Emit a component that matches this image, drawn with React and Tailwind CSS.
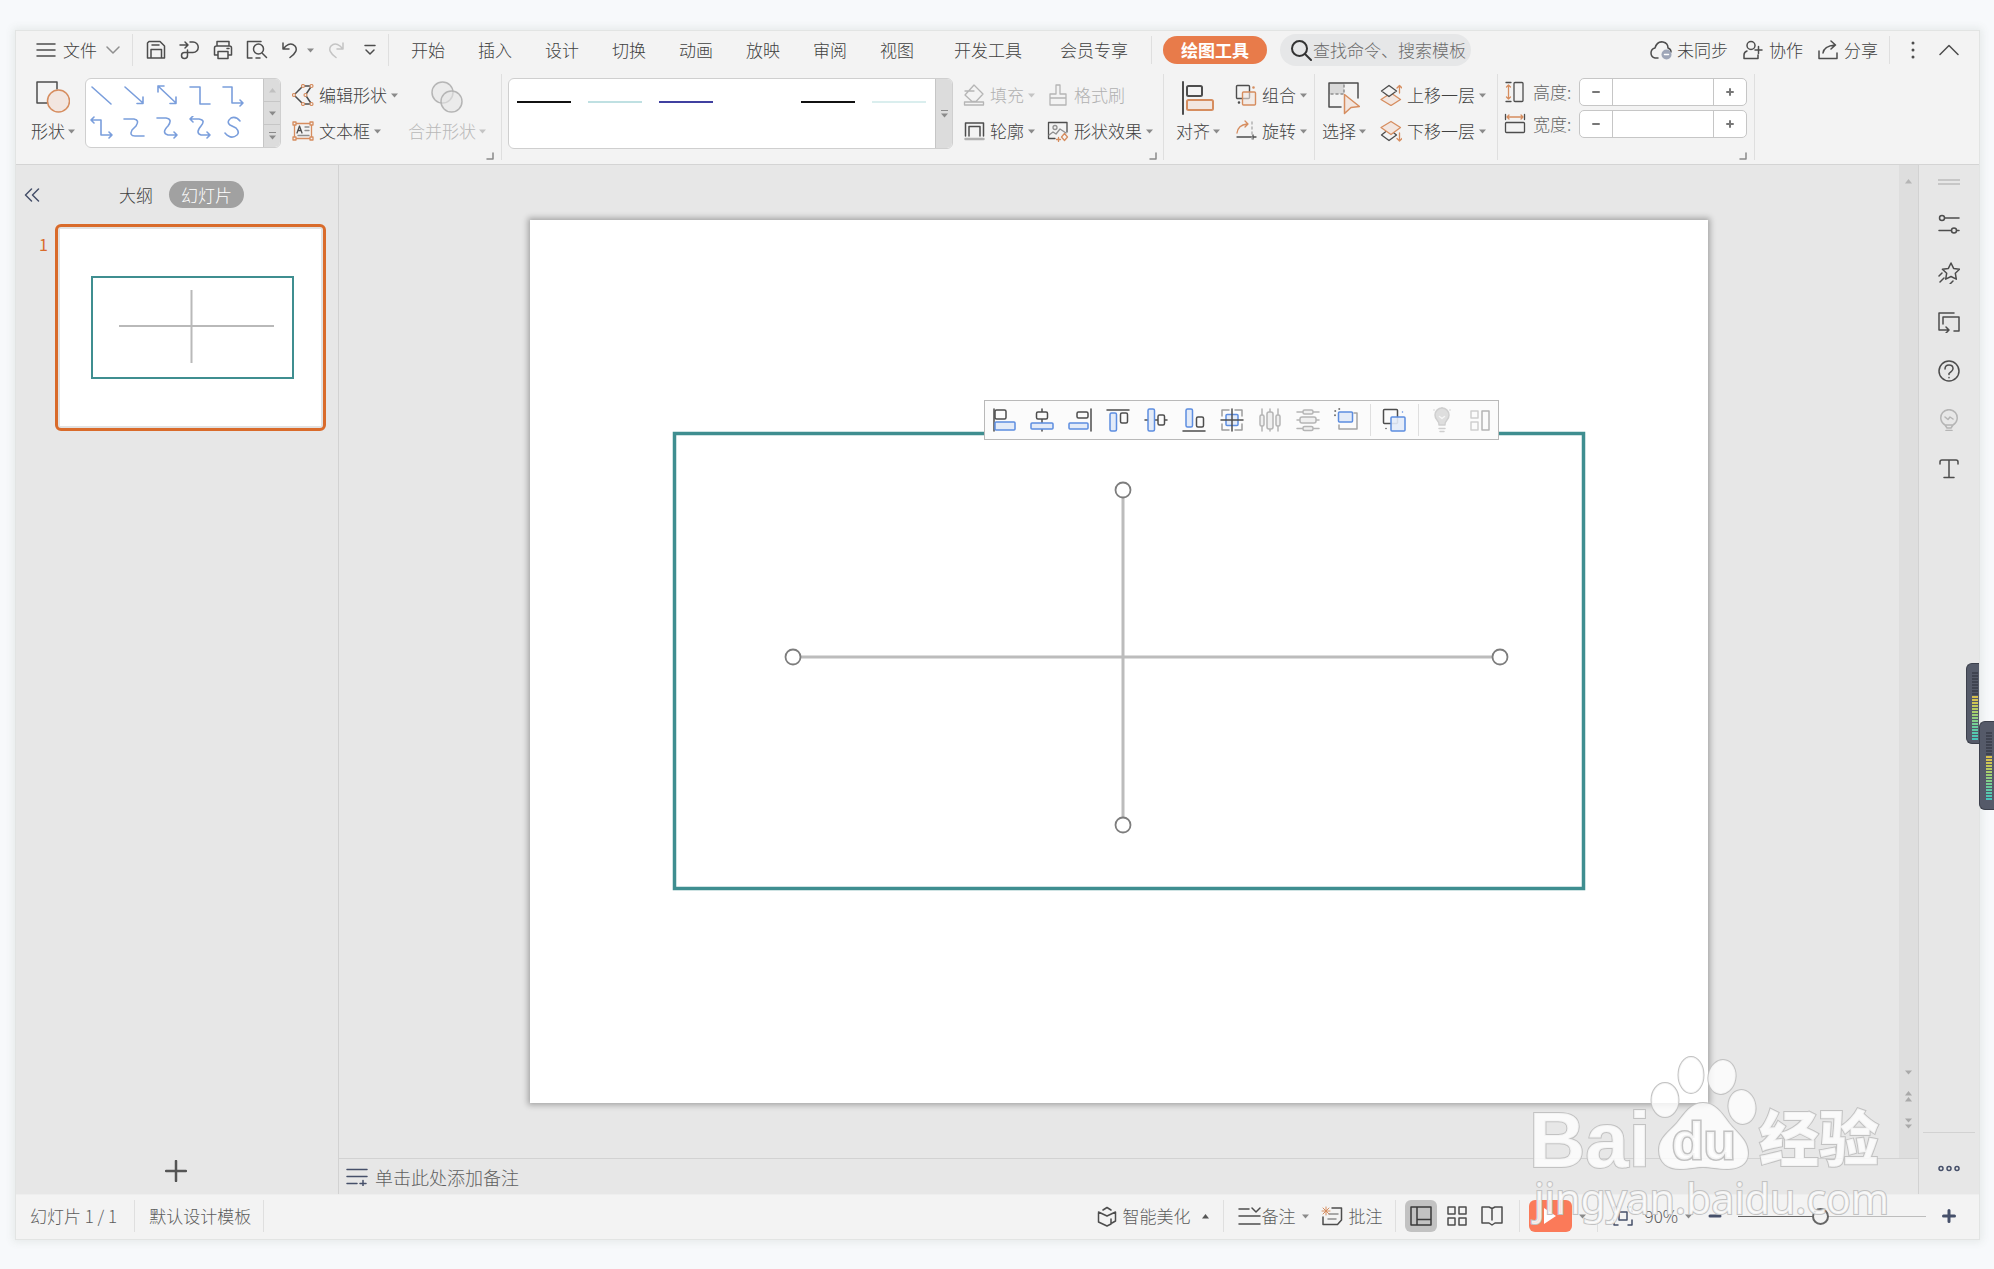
import React, { useState } from 'react';

const INK = '#4d4d4d';
const DIM = '#b5b5b5';
const ORANGE = '#d68d5f';
const PEACH = '#f2e6e0';
const NAVY = '#46506a';
const BLUE = '#5c8de0';
const SKY = '#e3ebf8';

const Svg = ({ w, h, children, stroke = INK, sw = 1.5, className = '' }) => (
  <svg
    width={w}
    height={h}
    viewBox={`0 0 ${w} ${h}`}
    fill="none"
    stroke={stroke}
    strokeWidth={sw}
    strokeLinecap="round"
    strokeLinejoin="round"
    className={`shrink-0 ${className}`}
    aria-hidden="true"
  >
    {children}
  </svg>
);

const Caret = ({ color = '#8a8a8a', up = false, className = '' }) => (
  <Svg w={7} h={5} stroke="none" className={className}>
    <path d={up ? 'M0 4.5h7L3.5 0z' : 'M0 .5h7L3.5 4.5z'} fill={color} />
  </Svg>
);

const Corner = ({ className = '' }) => (
  <button aria-label="更多选项" className={`absolute bottom-[4px] ${className}`}>
    <Svg w={8} h={8} stroke="#8a8a8a"><path d="M7 1v6H1" /></Svg>
  </button>
);

/* QUICK ACCESS ICONS */

const MenuIcon = () => (
  <Svg w={20} h={14}><path d="M1 1h18M1 7h18M1 13h18" /></Svg>
);

const SaveIcon = () => (
  <Svg w={20} h={20}>
    <path d="M3 1.500h11l4.500 4.500v12H1.500V3z M5 18V9.500h10.500V18M6 5h7" />
  </Svg>
);

const PdfIcon = () => (
  <Svg w={21} h={20}>
    <path d="M1 5h8M6 2l3 3-3 3M11 2h3a5 5 0 0 1 0 10.500H5.500a3 3 0 1 0 3 3V10" />
  </Svg>
);

const PrintIcon = () => (
  <Svg w={20} h={20}>
    <path d="M4 6V1.500h12V6M4 15H1.500V8q0-2 2-2h13q2 0 2 2v7H16M5 11.500h10v7H5zM14 8.500h2" />
  </Svg>
);

const PreviewIcon = () => (
  <Svg w={22} h={20}>
    <path d="M6 18H1.500V1.500H15M10 18h4M16.500 13.500l4 4" />
    <circle cx="12.5" cy="9" r="5" />
  </Svg>
);

const UndoIcon = () => (
  <Svg w={18} h={18}><path d="M2 2v6h6M2 8l3-3q5-4 9 0 4 5-5 11.500" /></Svg>
);

const RedoIcon = () => (
  <Svg w={18} h={18} stroke="#c4c4c4"><path d="M16 2v6h-6M16 8l-3-3q-5-4-9 0-4 5 5 11.500" /></Svg>
);

/* RIBBON ICONS */

const ShapesIcon = () => (
  <Svg w={34} h={32}>
    <path d="M12 22H1V1h20v7" />
    <circle cx="22.500" cy="20" r="11" fill={PEACH} stroke={ORANGE} />
  </Svg>
);

const EditShapeIcon = () => (
  <Svg w={22} h={22}>
    <path d="M11 2h8.500l-6 9 6 9H11L2 11z" />
    <g fill="#f3f3f3" stroke={ORANGE} strokeWidth="1.200">
      <circle cx="11" cy="2" r="1.500" /><circle cx="19.500" cy="2" r="1.500" />
      <circle cx="13.500" cy="11" r="1.500" /><circle cx="2" cy="11" r="1.500" />
      <circle cx="11" cy="20" r="1.500" /><circle cx="19.500" cy="20" r="1.500" />
    </g>
  </Svg>
);

const TextBoxIcon = () => (
  <Svg w={22} h={20} sw={1.3}>
    <path d="M2.500 2.500h17v15h-17z" stroke={ORANGE} />
    <path d="M5 12l2.500-7L10 12M6 9.500h3" />
    <path d="M13 6h4M13 9.500h4M6 14.500h11" stroke="#8f8f8f" />
    <g fill="#f3f3f3" stroke={ORANGE}>
      <path d="M1 1h3v3H1zM18 1h3v3h-3zM1 16h3v3H1zM18 16h3v3h-3z" />
    </g>
  </Svg>
);

const MergeIcon = () => (
  <Svg w={32} h={32} stroke={DIM}>
    <circle cx="11.500" cy="11.500" r="10.500" fill="#ebebeb" />
    <circle cx="20.500" cy="20.500" r="10.500" fill="#e6e6e6" fillOpacity=".6" />
  </Svg>
);

const FillIcon = () => (
  <Svg w={22} h={22} stroke={DIM} sw={1.3}>
    <path d="M11 1l9 9-7 7.500H9L2 11zM2 7h9M1.500 18h19v3h-19z" />
  </Svg>
);

const BrushIcon = () => (
  <Svg w={22} h={22} stroke={DIM} sw={1.3}>
    <path d="M9 1h4v9h6v11H3V10h6zM3 14h16" />
  </Svg>
);

const OutlineIcon = () => (
  <Svg w={22} h={22}>
    <path d="M2.500 16V3h18v13M6 16V6.500h11V16" />
    <path d="M2.500 19h18" stroke="#b0b0b0" strokeWidth="2.500" />
  </Svg>
);

const EffectIcon = () => (
  <Svg w={22} h={22} sw={1.3}>
    <path d="M8 18.500H1.500v-16h18.500V12" />
    <circle cx="8" cy="7.500" r="2" stroke="#8f8f8f" />
    <path d="M2 15l4-3 3 2 4-5 6 4" stroke="#8f8f8f" />
    <path d="M17.500 13.500l3 3.500-3 3.500-3-3.500zM11.500 17.500v4M9.500 19.500h4" stroke={ORANGE} />
  </Svg>
);

const AlignIcon = () => (
  <Svg w={32} h={34} sw={2}>
    <path d="M1 1v32" />
    <rect x="5" y="5" width="15" height="10" rx="1.500" />
    <rect x="5" y="19" width="26" height="10" rx="1.500" fill={PEACH} stroke={ORANGE} />
  </Svg>
);

const GroupIcon = () => (
  <Svg w={22} h={22} sw={1.4}>
    <rect x="1.500" y="1.500" width="13" height="13" rx="1" />
    <rect x="7.500" y="8" width="13" height="13" rx="1" stroke={ORANGE} fill={PEACH} fillOpacity=".6" />
    <circle cx="18.500" cy="3.500" r=".6" stroke={ORANGE} />
    <circle cx="4" cy="18.500" r=".6" />
  </Svg>
);

const RotateIcon = () => (
  <Svg w={22} h={22} sw={1.3}>
    <path d="M2 13Q3 5 12 4M10 1l3 3-3 3" stroke={ORANGE} />
    <path d="M2 17h19M18 15v4M16 17h4" />
    <path d="M17 2v19" stroke="#a8a8a8" strokeDasharray="2 3" />
  </Svg>
);

const SelectIcon = () => (
  <Svg w={32} h={34}>
    <path d="M1 2h15v11H1z" fill="#d9d9d9" stroke="none" />
    <path d="M1 26V2h29v15M1 26h12" />
    <path d="M3 13h13V4" stroke="#8f8f8f" strokeDasharray="2 3" />
    <path d="M16.500 13.500l15 12-8.500 1-6.500 6z" fill={PEACH} stroke={ORANGE} />
  </Svg>
);

const ForwardIcon = () => (
  <Svg w={22} h={22} sw={1.3}>
    <path d="M11 9l9.500 6.500L11 21.500 1 15.500z" fill={PEACH} stroke={ORANGE} />
    <path d="M9 1.500l7.500 5.500L9 12.500 1.500 7z" fill="#f3f3f3" />
    <path d="M19.500 9V2M17 4l2.500-2.500L22 4" stroke={ORANGE} />
  </Svg>
);

const BackwardIcon = () => (
  <Svg w={22} h={22} sw={1.3}>
    <path d="M9 9l7.500 6L9 20.500 1.500 15z" />
    <path d="M11 1.500l9.500 6L11 14.500 1 7.500z" fill={PEACH} stroke={ORANGE} />
    <path d="M19.500 13v8M17 18.500l2.500 2.500 2.500-2.500" stroke={ORANGE} />
  </Svg>
);

const HeightIcon = () => (
  <Svg w={22} h={22} sw={1.3}>
    <path d="M2 1.500h5M2 20.500h5" />
    <path d="M4.500 4v14M2.500 6l2-2 2 2M2.500 16l2 2 2-2" stroke={ORANGE} />
    <rect x="10" y="1.500" width="9" height="19" rx="1" />
  </Svg>
);

const WidthIcon = () => (
  <Svg w={22} h={22} sw={1.3}>
    <path d="M1.500 1.500v5M20.500 1.500v5" />
    <path d="M3 4h16M5 2L3 4l2 2M17 2l2 2-2 2" stroke={ORANGE} />
    <rect x="1.500" y="9.500" width="19" height="10" rx="1" />
  </Svg>
);

const shapeGlyphs = [
  'M2 3l19 17',
  'M2 3l18 16M20 13v6.500h-6',
  'M2 2l18 17M20 13v6.500h-6M2 8V2h6',
  'M1 3h10v17h10',
  'M1 3h9v16h11M18 16l3 3-3 3',
  'M4 1L1 4l3 3M1 4h10v15h11M19 16l3 3-3 3',
  'M1 3h10q6 1 2 7l-4 4q-3 6 3 6h9',
  'M1 2h9q7 1 2 8-7 7 0 9h9M18 16l3 3-3 3',
  'M4 0L1 3l3 3M1 3h9q7 1 2 7-6 7 0 9h9M18 16l3 3-3 3',
  'M18 5q-4-5-9-3-5 4-1 7l6 3q4 4 1 7-6 5-12-2',
];

const tabs = ['开始', '插入', '设计', '切换', '动画', '放映', '审阅', '视图'];
const lineStyles = ['#111111', '#bfe0e2', '#4040a0', '#ffffff', '#111111', '#daeeee'];

const Divider = ({ className = '' }) => (
  <span className={`w-px shrink-0 bg-[#dfdfdf] ${className}`} />
);

const MenuBar = () => (
  <header className="flex h-[38px] items-center">
    <button className="ml-5 flex items-center">
      <MenuIcon />
      <span className="ml-[7px]">文件</span>
      <Svg w={14} h={8} stroke="#8f8f8f" className="ml-[9px]"><path d="M1 1l6 6 6-6" /></Svg>
    </button>
    <Divider className="ml-3 h-8" />

    <div className="ml-[13px] flex items-center gap-[13px]">
      <button aria-label="保存"><SaveIcon /></button>
      <button aria-label="输出为PDF"><PdfIcon /></button>
      <button aria-label="打印"><PrintIcon /></button>
      <button aria-label="打印预览"><PreviewIcon /></button>
      <button aria-label="撤销" className="flex items-center gap-2"><UndoIcon /><Caret /></button>
      <button aria-label="恢复"><RedoIcon /></button>
      <button aria-label="自定义" className="ml-[6px]">
        <Svg w={12} h={12}><path d="M1 1.500h10M2 6l4 4 4-4" /></Svg>
      </button>
    </div>
    <Divider className="ml-3 h-8" />

    <nav className="ml-[22px] flex items-center gap-[33px]">
      {tabs.map((t) => <button key={t}>{t}</button>)}
    </nav>
    <button className="ml-10">开发工具</button>
    <button className="ml-[38px]">会员专享</button>
    <Divider className="ml-[23px] h-7" />
    <button className="ml-[11px] h-7 rounded-full bg-[#e87b4a] px-[18px] font-bold text-white">绘图工具</button>
    <label className="ml-[13px] flex h-8 w-[191px] items-center gap-px rounded-full bg-[#e6e7e8] pl-[11px]">
      <Svg w={21} h={21} stroke="#333" sw={2}>
        <circle cx="8.500" cy="8.500" r="7.500" /><path d="M14 14l6 6" />
      </Svg>
      <input
        type="text"
        aria-label="搜索"
        placeholder="查找命令、搜索模板"
        className="w-full min-w-0 bg-transparent outline-none placeholder:text-[#6b6b6b]"
      />
    </label>

    <div className="ml-auto flex items-center gap-[15px] pr-5">
      <button className="flex items-center gap-[5px]">
        <Svg w={22} h={20}>
          <path d="M8 18H5q-4-1-4-5t4-5q2-7 8-6 5 1 5 6 3 1 3 4" />
          <circle cx="16.500" cy="14.500" r="5" fill="#9ea6b8" stroke="none" />
          <path d="M14.500 14.500h4" stroke="#fff" />
        </Svg>
        未同步
      </button>
      <button className="flex items-center gap-[6px]">
        <Svg w={20} h={20}>
          <circle cx="8" cy="5.500" r="4" />
          <path d="M4 11q-3 1-3 4v3.500h14V15M12 10h7M15.500 6.500v7" />
        </Svg>
        协作
      </button>
      <button className="flex items-center gap-[6px]">
        <Svg w={20} h={20}>
          <path d="M1 11v7.500h18V13M5 13Q6 6 17 5M13 1l4.500 4-4.500 4" />
        </Svg>
        分享
      </button>
      <Divider className="-ml-1 h-7" />
      <button aria-label="更多" className="ml-[5px]">
        <Svg w={6} h={18} stroke="none">
          <g fill="#4d4d4d"><circle cx="3" cy="2" r="1.500" /><circle cx="3" cy="9" r="1.500" /><circle cx="3" cy="16" r="1.500" /></g>
        </Svg>
      </button>
      <button aria-label="收起功能区" className="ml-2">
        <Svg w={20} h={12}><path d="M1 10.500l9-9 9 9" /></Svg>
      </button>
    </div>
  </header>
);

const SmallButton = ({ icon, label, caret = true, disabled = false }) => (
  <button
    disabled={disabled}
    className={`flex h-6 items-center whitespace-nowrap ${disabled ? 'text-[#b0b0b0]' : ''}`}
  >
    {icon}
    <span className="ml-[5px]">{label}</span>
    {caret && <Caret color={disabled ? '#c4c4c4' : '#8a8a8a'} className="ml-1" />}
  </button>
);

const BigButton = ({ icon, label, disabled = false }) => (
  <button
    disabled={disabled}
    className={`flex h-[65px] flex-col items-center justify-between pt-[3px] ${disabled ? 'text-[#b8b8b8]' : ''}`}
  >
    {icon}
    <span className="flex items-center gap-[3px] whitespace-nowrap leading-6">
      {label}
      <Caret color={disabled ? '#c4c4c4' : '#8a8a8a'} />
    </span>
  </button>
);

const SizeField = ({ icon, id, label }) => {
  const [value, setValue] = useState('');

  return (
    <div className="flex h-7 items-center">
      {icon}
      <label htmlFor={id} className="ml-[7px] w-[46px] whitespace-nowrap text-[#666]">{label}:</label>
      <div className="flex h-7 w-[168px] overflow-hidden rounded-[5px] border border-[#c6c6c6] bg-white">
        <button
          aria-label={`减少${label}`}
          onClick={() => setValue(String(Math.max(0, Number(value) - 1)))}
          className="flex w-8 items-center justify-center"
        >
          <Svg w={8} h={8} stroke="#777" sw={2}><path d="M1 4h6" /></Svg>
        </button>
        <input
          id={id}
          value={value}
          onChange={(e) => setValue(e.target.value)}
          className="min-w-0 flex-1 border-x border-[#c6c6c6] px-2 outline-none"
        />
        <button
          aria-label={`增加${label}`}
          onClick={() => setValue(String(Number(value) + 1))}
          className="flex w-8 items-center justify-center"
        >
          <Svg w={8} h={8} stroke="#777" sw={2}><path d="M1 4h6M4 1v6" /></Svg>
        </button>
      </div>
    </div>
  );
};

const Column = ({ children, className = '' }) => (
  <div className={`flex flex-col items-start gap-3 pt-[5px] ${className}`}>{children}</div>
);

const Ribbon = () => (
  <div className="flex h-[96px] items-start border-b border-[#d4d4d4]">
    <section className="relative flex h-full items-start pt-[9px] pr-[15px]">
      <div className="ml-[15px]"><BigButton icon={<ShapesIcon />} label="形状" /></div>
      <div className="ml-[10px] flex h-[70px] w-[196px] overflow-hidden rounded-md border border-[#cfcfcf] bg-white">
        <div className="grid flex-1 auto-rows-[32px] grid-cols-[repeat(5,33px)] content-start pl-1">
          {shapeGlyphs.map((d) => (
            <button key={d} aria-label="线条" className="flex items-center justify-start">
              <Svg w={24} h={23} stroke="#7a9edc" sw={1.6}><path d={d} /></Svg>
            </button>
          ))}
        </div>
        <div className="flex w-[17px] flex-col divide-y divide-[#c6c6c6] border-l border-[#c6c6c6] bg-[#dcdcdc]">
          <button aria-label="上一行" className="flex flex-1 items-center justify-center"><Caret up color="#c0c0c0" /></button>
          <button aria-label="下一行" className="flex flex-1 items-center justify-center"><Caret /></button>
          <button aria-label="展开" className="flex flex-1 flex-col items-center justify-center gap-[2px]">
            <span className="h-px w-[7px] bg-[#8a8a8a]" /><Caret />
          </button>
        </div>
      </div>
      <Column className="ml-[11px]">
        <SmallButton icon={<EditShapeIcon />} label="编辑形状" />
        <SmallButton icon={<TextBoxIcon />} label="文本框" />
      </Column>
      <div className="ml-[10px]"><BigButton icon={<MergeIcon />} label="合并形状" disabled /></div>
      <Corner className="right-[7px]" />
    </section>
    <Divider className="mt-[5px] h-[86px]" />

    <section className="relative flex h-full items-start pt-[9px] pr-[10px]">
      <div className="ml-[6px] flex h-[71px] w-[445px] overflow-hidden rounded-md border border-[#cfcfcf] bg-white">
        <div className="flex flex-1 items-start gap-[17px] pl-2">
          {lineStyles.map((c, i) => (
            <button key={i} aria-label={`线型 ${i + 1}`} className="flex h-[46px] w-[54px] items-center">
              <span className="h-[2px] w-full" style={{ backgroundColor: c }} />
            </button>
          ))}
        </div>
        <button aria-label="展开样式" className="flex w-[17px] flex-col items-center justify-center gap-[2px] border-l border-[#c6c6c6] bg-[#dcdcdc]">
          <span className="h-px w-[7px] bg-[#8a8a8a]" /><Caret />
        </button>
      </div>
      <Column className="ml-[10px]">
        <SmallButton icon={<FillIcon />} label="填充" disabled />
        <SmallButton icon={<OutlineIcon />} label="轮廓" />
      </Column>
      <Column className="ml-3">
        <SmallButton icon={<BrushIcon />} label="格式刷" caret={false} disabled />
        <SmallButton icon={<EffectIcon />} label="形状效果" />
      </Column>
      <Corner className="right-[6px]" />
    </section>
    <Divider className="mt-[5px] h-[86px]" />

    <section className="flex h-full items-start pt-[9px] pr-[7px]">
      <div className="ml-3"><BigButton icon={<AlignIcon />} label="对齐" /></div>
      <Column className="ml-[15px]">
        <SmallButton icon={<GroupIcon />} label="组合" />
        <SmallButton icon={<RotateIcon />} label="旋转" />
      </Column>
    </section>
    <Divider className="mt-[5px] h-[86px]" />

    <section className="flex h-full items-start pt-[9px] pr-2">
      <div className="ml-[7px]"><BigButton icon={<SelectIcon />} label="选择" /></div>
      <Column className="ml-[14px]">
        <SmallButton icon={<ForwardIcon />} label="上移一层" />
        <SmallButton icon={<BackwardIcon />} label="下移一层" />
      </Column>
    </section>
    <Divider className="mt-[5px] ml-[3px] h-[86px]" />

    <section className="relative flex h-full flex-col gap-1 pt-[9px] pr-[7px] pl-[6px]">
      <SizeField icon={<HeightIcon />} id="shape-height" label="高度" />
      <SizeField icon={<WidthIcon />} id="shape-width" label="宽度" />
      <Corner className="right-[7px]" />
    </section>
    <Divider className="mt-[5px] h-[86px]" />
  </div>
);

const SlidePanel = () => (
  <aside className="flex w-[323px] shrink-0 flex-col border-r border-[#d2d2d2]">
    <div className="flex h-[59px] items-center">
      <button aria-label="收起" className="ml-2">
        <Svg w={16} h={14} stroke={NAVY}><path d="M7.500 1L1.500 7l6 6M14.500 1l-6 6 6 6" /></Svg>
      </button>
      <button className="ml-[79px]">大纲</button>
      <button className="ml-4 h-[27px] rounded-full bg-[#a1a1a1] px-3 leading-[27px] text-white">幻灯片</button>
    </div>
    <div className="flex items-start">
      <span className="mt-2 w-[39px] pl-[23px] text-base font-normal text-[#d96b2b]">1</span>
      <button aria-label="幻灯片 1" className="rounded-md border-3 border-[#d96b2b] bg-[#e2e2e2] p-[2px]">
        <svg width="261" height="197" viewBox="0 0 261 197" className="block bg-white" fill="none">
          <rect x="32" y="48" width="201" height="101" stroke="#3f8e90" strokeWidth="2" />
          <path d="M59 97h155M131.500 61v73" stroke="#b9b9b9" strokeWidth="2" />
        </svg>
      </button>
    </div>
    <button aria-label="新建幻灯片" className="mt-auto mb-3 ml-[149px] w-6">
      <Svg w={22} h={22} sw={2.5} stroke="#555"><path d="M1 11h20M11 1v20" /></Svg>
    </button>
  </aside>
);

const alignTools = [
  ['左对齐', <><path d="M2 1v22" /><rect x="3" y="2" width="11" height="9" rx="1.500" /><rect x="3" y="14" width="20" height="8" rx="1" stroke={BLUE} fill={SKY} /></>],
  ['水平居中', <><path d="M12 1v22" /><rect x="6.500" y="4" width="11" height="7" rx="1.500" fill="#fbfbfb" /><rect x="1" y="15" width="22" height="6" rx="1" stroke={BLUE} fill={SKY} /></>],
  ['右对齐', <><path d="M23 1v22" /><rect x="9" y="4" width="11" height="6" rx="1.500" /><rect x="1" y="15" width="19" height="6" rx="1" stroke={BLUE} fill={SKY} /></>],
  ['靠上对齐', <><path d="M1 2h22" /><rect x="4" y="5" width="6.500" height="18" rx="1.500" stroke={BLUE} fill={SKY} /><rect x="14.500" y="5" width="7" height="10" rx="1.500" /></>],
  ['垂直居中', <><path d="M1 12h22" /><rect x="4" y="1" width="6.500" height="22" rx="1.500" stroke={BLUE} fill={SKY} /><rect x="14" y="7" width="6.500" height="10" rx="1.500" fill="#fbfbfb" /></>],
  ['靠下对齐', <><path d="M1 23h22" /><rect x="4" y="1" width="6.500" height="18" rx="1.500" stroke={BLUE} fill={SKY} /><rect x="14.500" y="9" width="7" height="10" rx="1.500" /></>],
  ['中心对齐', <><path d="M2 8V2h7M15 2h7v6M22 16v6h-7M9 22H2v-6" stroke="#9d9d9d" /><rect x="6" y="6.500" width="12" height="11" rx="1" stroke={BLUE} fill={SKY} /><path d="M12 1v22M1 12h22" /></>],
  ['横向分布', <g stroke={DIM}><path d="M4 1v22M12 1v22M20 1v22" /><rect x="2" y="7" width="4" height="11" rx="1.500" fill="#f0f0f0" /><rect x="9" y="4" width="6" height="17" rx="2" fill="#f0f0f0" /><rect x="18" y="7" width="4" height="11" rx="1.500" fill="#f0f0f0" /></g>],
  ['纵向分布', <g stroke={DIM}><path d="M1 4h22M1 12h22M1 20.500h22" /><rect x="7" y="2" width="10" height="4" rx="1.500" fill="#f0f0f0" /><rect x="4" y="9" width="16" height="6" rx="2" fill="#f0f0f0" /><rect x="7" y="18.500" width="10" height="4" rx="1.500" fill="#f0f0f0" /></g>],
  ['等尺寸', <><path d="M20 5h3v16H5v-4" stroke="#a5a5a5" /><rect x="4.500" y="4" width="14" height="10" rx="1" stroke={BLUE} fill={SKY} /><path d="M1 3h.5M5 1h.5M1 7v.5" /></>],
];

const FloatingToolbar = () => (
  <div className="absolute top-[180px] left-[454px] flex h-10 items-center border border-[#b9b9b9] bg-[#fbfbfb] pr-[6px] pb-px pl-[7px]">
    <div className="flex gap-[14px]">
      {alignTools.map(([name, art]) => (
        <button key={name} aria-label={name}><Svg w={24} h={24}>{art}</Svg></button>
      ))}
    </div>
    <Divider className="ml-3 h-8" />
    <button aria-label="组合" className="ml-[11px]">
      <Svg w={24} h={24}>
        <rect x="1.500" y="1.500" width="14" height="14" rx="1" />
        <rect x="9" y="9" width="14" height="14" rx="1" stroke={BLUE} fill={SKY} fillOpacity=".9" />
        <path d="M4 20.500v.1" /><path d="M20.500 4v.1" stroke={BLUE} />
      </Svg>
    </button>
    <Divider className="ml-3 h-8" />
    <button aria-label="智能建议" className="ml-[11px]">
      <Svg w={24} h={26} stroke="#cfcfcf">
        <path d="M9 18q0-3-2-5a7 7 0 1 1 10 0q-2 2-2 5zM9 21.500h6M10 24.500h4" fill="#dedede" />
        <path d="M9.500 9.500l2.500 2 2.500-2" stroke="#f5f5f5" /><path d="M4 3v.1M12 .8v.1M20 3v.1" />
      </Svg>
    </button>
    <button aria-label="版式" className="ml-[14px]">
      <Svg w={24} h={24} stroke="#cfcfcf">
        <rect x="3" y="3" width="7" height="7" /><rect x="3" y="14" width="7" height="8" /><rect x="14" y="3" width="7" height="19" stroke="#b5b5b5" />
      </Svg>
    </button>
  </div>
);

const handles = [[593, 270], [593, 605], [263, 437], [970, 437]];

const Canvas = () => (
  <div className="flex flex-1 items-start justify-center pt-[55px]">
    <div className="relative bg-white shadow-[0_0_6px_2px_rgba(0,0,0,0.3)]">
      <svg width="1178" height="883" viewBox="0 0 1178 883" className="block" fill="none">
        <rect x="144.500" y="213.500" width="909" height="455" stroke="#3f8e90" strokeWidth="3.500" />
        <path d="M593 270v335M263 437h707" stroke="#bcbcbc" strokeWidth="3" />
        {handles.map(([x, y]) => (
          <circle key={`${x}-${y}`} cx={x} cy={y} r="7.500" fill="#fff" stroke="#7d7d7d" strokeWidth="1.800" />
        ))}
      </svg>
      <FloatingToolbar />
    </div>
  </div>
);

const ScrollBar = () => (
  <div className="flex w-5 flex-col items-center border-r border-[#d2d2d2] bg-[#dedede] pt-[14px] pb-[29px]">
    <Caret up color="#b5b5b5" />
    <div className="flex-1" />
    <Caret color="#a9a9a9" />
    <div className="mt-4"><Caret up color="#a9a9a9" /><Caret up color="#a9a9a9" className="mt-px" /></div>
    <div className="mt-4"><Caret color="#a9a9a9" /><Caret color="#a9a9a9" className="mt-px" /></div>
  </div>
);

const railIcons = [
  ['属性', <><circle cx="4" cy="5" r="2.500" /><path d="M7 5h14M1 17.500h12M19 17.500h2" /><circle cx="16" cy="17.500" r="2.500" /></>],
  ['动画', <><path d="M13 1l2.600 5.400 6 .8-4.300 4 1 6L13 14.500l-5.300 2.700 1-6-4.300-4 6-.8zM1 14l3-3M2 20l4-4M12 22l3-3" /></>],
  ['切换', <><path d="M16 2H1v17h9M8 16l3 3-3 3M5 13V6h16v14h-5" /></>],
  ['帮助', <><circle cx="11" cy="11" r="10" /><path d="M7 9q0-4 4-4t4 3.500q0 2-4 5v1M11 17.500v.2" /></>],
  ['建议', <g stroke="#b5b5b5"><path d="M7 16a8.200 8.200 0 1 1 8 0l-2 3H9zM7 16h8M8 21.500h6M7 8l3 2.500L12 8l3 2" /></g>],
  ['文字', <><path d="M2 6V4q0-2 2-2h14q2 0 2 2v2M11 2v17M6 19.500h10" /></>],
];

const Rail = () => (
  <aside className="flex w-[60px] shrink-0 flex-col items-center">
    <Svg w={22} h={6} stroke="#bdbdbd" className="mt-[14px]"><path d="M0 1h22M0 5h22" /></Svg>
    <div className="mt-[28px] flex flex-col gap-[27px]">
      {railIcons.map(([name, art]) => (
        <button key={name} aria-label={name}><Svg w={22} h={22}>{art}</Svg></button>
      ))}
    </div>
    <span className="mt-auto h-px w-[52px] bg-[#d2d2d2]" />
    <button aria-label="更多工具" className="mt-8 mb-[22px]">
      <Svg w={22} h={7} stroke={NAVY}><circle cx="3" cy="3.500" r="2" /><circle cx="11" cy="3.500" r="2" /><circle cx="19" cy="3.500" r="2" /></Svg>
    </button>
  </aside>
);

const StatusBar = () => (
  <footer className="flex h-[45px] items-center border-t border-[#eeeeee] bg-[#f3f3f3] pb-[2px] text-[#5c5c5c]">
    <span className="ml-[14px]">幻灯片 1 / 1</span>
    <Divider className="ml-[17px] h-8" />
    <button className="ml-[14px]">默认设计模板</button>
    <Divider className="ml-3 h-8" />

    <div className="ml-auto flex items-center">
      <button className="flex items-center">
        <Svg w={20} h={21}><path d="M6 4l4-2.500L14 4M1.500 6l8.500 4 8.500-4v9L15 17M1.500 6v10l8.500 4 4-2v-5" /></Svg>
        <span className="ml-[6px]">智能美化</span>
        <Caret up className="ml-[11px]" color="#555" />
      </button>
      <Divider className="ml-[14px] h-8" />
      <button className="ml-[14px] flex items-center">
        <Svg w={23} h={20}><path d="M1 3h10M1 10h21M1 18h21M14 2l4 4 4-4" /></Svg>
        <span className="ml-px">备注</span>
        <Caret className="ml-[6px]" />
      </button>
      <button className="ml-3 flex items-center">
        <Svg w={22} h={20}>
          <path d="M11 2h9.500v12l-4 4.500H2V11" />
          <path d="M8 8h9M7 13h8" stroke="#8f8f8f" />
          <path d="M5 1v8M1 5h8M2 2l6 6M8 2L2 8" stroke={ORANGE} strokeWidth="1" />
        </Svg>
        <span className="ml-[6px]">批注</span>
      </button>
      <Divider className="ml-3 h-8" />
      <button aria-label="普通视图" className="ml-[9px] flex h-8 w-8 items-center justify-center rounded-md bg-[#c2c2c2]">
        <Svg w={22} h={20} stroke="#3a3a3a"><path d="M1 1h20v18H1zM7 1v18M7 13.500h14" /></Svg>
      </button>
      <button aria-label="幻灯片浏览" className="ml-[10px]">
        <Svg w={20} h={20}><path d="M1 1h7v7H1zM12 1h7v7h-7zM1 12h7v7H1zM12 12h7v7h-7z" /></Svg>
      </button>
      <button aria-label="阅读视图" className="ml-[14px]">
        <Svg w={22} h={20}><path d="M1 1h7l3 1.500L14 1h7v16h-7l-3 2-3-2H1zM11 3v11" /></Svg>
      </button>
      <Divider className="ml-4 h-8" />
      <button aria-label="放映" className="ml-[9px] flex h-8 w-[43px] items-center justify-center rounded-md bg-[#fb7a59]">
        <Svg w={14} h={18} stroke="none"><path d="M1 1l12 8-12 8z" fill="#fff" /></Svg>
      </button>
      <Caret className="ml-[7px]" />
      <Divider className="ml-[11px] h-8" />
      <button aria-label="适应窗口" className="ml-[15px]">
        <Svg w={20} h={20} stroke={NAVY}><path d="M1 6V1h4M15 1h4v5M19 14v5h-4M5 19H1v-5M6 6h8v8H6z" /></Svg>
      </button>
      <button className="ml-3 flex items-center gap-[7px]">90%<Caret /></button>
      <button aria-label="缩小" className="ml-4"><Svg w={14} h={14} stroke={NAVY} sw={3}><path d="M2 7h10" /></Svg></button>
      <input
        type="range"
        aria-label="缩放"
        min="0"
        max="100"
        defaultValue="43"
        className="ml-4 h-[17px] w-[188px] appearance-none bg-[linear-gradient(to_right,#666_43%,#bdbdbd_43%)] bg-[length:100%_1px] bg-center bg-no-repeat [&::-webkit-slider-thumb]:size-[17px] [&::-webkit-slider-thumb]:appearance-none [&::-webkit-slider-thumb]:rounded-full [&::-webkit-slider-thumb]:border-2 [&::-webkit-slider-thumb]:border-[#666] [&::-webkit-slider-thumb]:bg-[#f3f3f3]"
      />
      <button aria-label="放大" className="mr-[23px] ml-4"><Svg w={14} h={14} stroke={NAVY} sw={3}><path d="M1.500 7h11M7 1.500v11" /></Svg></button>
    </div>
  </footer>
);

const levels = [
  '#3f4350', '#3f4350', '#3f4350', '#3f4350', '#3f4350', '#3f4350', '#3f4350', '#3f4350',
  '#d8c04e', '#d6c350', '#cfc653', '#c3c95a', '#b7cc62', '#aacf6b', '#9dcf75', '#90cf80',
  '#83cf8a', '#76cf94', '#69cd9d', '#5fcba6', '#56c9ae', '#4fc7b4', '#49c5ba',
];

const Meter = ({ className = '' }) => (
  <div className={`absolute flex flex-col items-center gap-px rounded-l-md border-y border-l border-[#3c404c] bg-[#555a69] pl-[3px] ${className}`}>
    {levels.map((c, i) => (
      <span key={i} className="h-[2px] w-[6px]" style={{ backgroundColor: c }} />
    ))}
  </div>
);

const Watermark = () => (
  <svg
    width="375"
    height="180"
    viewBox="0 0 375 180"
    className="pointer-events-none absolute right-[94px] bottom-[39px]"
    fill="#fff"
    fillOpacity=".8"
    stroke="#c2c2c2"
    strokeWidth="2"
    style={{ paintOrder: 'stroke' }}
  >
    <ellipse cx="140" cy="50" rx="13.500" ry="17" />
    <ellipse cx="166" cy="25" rx="12.500" ry="18" />
    <ellipse cx="197" cy="27" rx="13.500" ry="17" transform="rotate(10 197 27)" />
    <ellipse cx="217" cy="57" rx="13.500" ry="17" transform="rotate(-8 217 57)" />
    <path d="M178 53C190 53 196 62 204 73C212 83 223 90 223 103C223 115 213 119 202 119C192 119 186 117 178 117C170 117 165 119 155 119C143 119 134 113 134 100C134 88 144 82 152 73C160 63 166 53 178 53Z" />
    <g fontFamily="'Liberation Sans', Arial, sans-serif" fontWeight="700">
      <text x="4" y="117" fontSize="78">Bai</text>
      <text x="147" y="109" fontSize="52" strokeWidth="3">du</text>
    </g>
    <text x="234" y="111" fontSize="60" fontWeight="900" fontFamily="'Noto Sans CJK SC', sans-serif">经验</text>
    <text x="9" y="164" fontSize="41" fontWeight="400" fontFamily="'Noto Sans', sans-serif">jingyan.baidu.com</text>
  </svg>
);

const App = () => (
  <div className="relative flex h-screen flex-col overflow-hidden bg-[#f7f9fb] pt-[30px] pr-[14px] pb-[29px] pl-[15px] font-['Noto_Sans_CJK_SC','Noto_Sans',sans-serif] text-[17px] leading-6 font-light text-[#404040]">
    <div className="relative flex min-h-0 flex-1 flex-col border border-[#e2e4e3] bg-[#f3f3f3] shadow-[0_0_8px_2px_rgba(80,100,80,0.1)]">
      <MenuBar />
      <Ribbon />

      <main className="flex min-h-0 flex-1 bg-[#e7e7e7]">
        <SlidePanel />
        <div className="flex min-w-0 flex-1 flex-col">
          <div className="flex min-h-0 flex-1">
            <Canvas />
            <ScrollBar />
          </div>
          <div className="flex h-9 items-center border-t border-r border-[#d2d2d2]">
            <Svg w={23} h={18} stroke={NAVY} className="ml-[7px]"><path d="M1 1.500h20M1 8.500h20M1 15.500h10M14 15.500h6M17 12.500v6" /></Svg>
            <input
              aria-label="备注"
              placeholder="单击此处添加备注"
              className="ml-[6px] flex-1 bg-transparent text-lg outline-none placeholder:text-[#606060]"
            />
          </div>
        </div>
        <Rail />
      </main>

      <StatusBar />
      <Meter className="top-[632px] right-0 h-[81px] w-[13px] pt-2" />
    </div>

    <Meter className="top-[721px] right-0 h-[89px] w-[15px] pt-[10px]" />
    <Watermark />
  </div>
);

export default App;
